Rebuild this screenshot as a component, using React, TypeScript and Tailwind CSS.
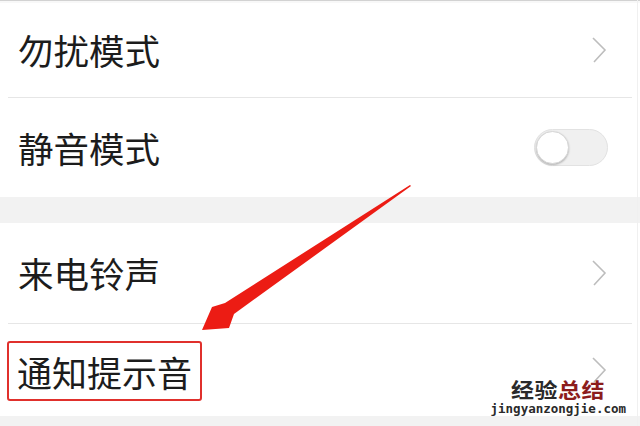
import { ReactNode } from 'react';

const font = { fontFamily: '"Noto Sans CJK SC", "Noto Sans", sans-serif' };

function Chevron() {
  return (
    <svg width="16" height="28" viewBox="0 0 16 28" className="shrink-0">
      <polyline points="2,2 14,14 3,26" fill="none" stroke="#bdbdbd" strokeWidth="1.6" />
    </svg>
  );
}

function Toggle() {
  return (
    <div className="relative w-[74px] h-[37px] rounded-full bg-[#f0f0f0] border border-[#e2e2e2] shrink-0">
      <div className="absolute left-[1px] top-[1px] w-[33px] h-[33px] rounded-full bg-white border border-[#d6d6d6] shadow-[0_1px_2px_rgba(0,0,0,0.25)]" />
    </div>
  );
}

function Row({ label, right, h, boxed }: { label: string; right: ReactNode; h: string; boxed?: boolean }) {
  return (
    <div className={`flex items-center justify-between pl-[18px] pr-[33px] ${h}`}>
      {boxed ? (
        <span className="ml-[-11px] mt-[2px] px-[8px] h-[60px] flex items-center border-2 border-[#e0302c] rounded-[3px] text-[35px] text-[#1c1c1c] leading-none">
          {label}
        </span>
      ) : (
        <span className="text-[35.5px] text-[#1c1c1c] leading-none">{label}</span>
      )}
      {right}
    </div>
  );
}

export default function App() {
  return (
    <div className="relative w-[640px] h-[426px] overflow-hidden bg-white" style={font}>
      <div className="h-[3px] border-t border-[#d2d2d2] bg-[#f8f8f8]" />
      <Row label="勿扰模式" right={<Chevron />} h="h-[94px]" />
      <div className="mx-2 h-px bg-[#e6e6e6]" />
      <Row label="静音模式" right={<div className="mr-[-1px]"><Toggle /></div>} h="h-[99px]" />
      <div className="h-[26px] bg-[#f2f2f2]" />
      <Row label="来电铃声" right={<Chevron />} h="h-[100px]" />
      <div className="mx-2 h-px bg-[#e6e6e6]" />
      <Row label="通知提示音" right={<Chevron />} h="h-[92px]" boxed />
      <div className="h-[10px] bg-[#f2f2f2]" />

      {/* right edge line */}
      <div className="absolute right-[2px] top-0 bottom-0 w-px bg-[#f0f0f0]" />

      {/* red arrow */}
      <svg className="absolute inset-0" width="640" height="426" viewBox="0 0 640 426">
        <path
          d="M410,185 L411,186 L234,314 L229,328 L202,330 L212,307 L225,303 Z"
          fill="#ec1c14"
        />
      </svg>

      {/* watermark */}
      <div className="absolute right-[14px] bottom-[11px] flex flex-col items-end gap-[4px]">
        <div className="mr-[21px] flex text-[23px] font-bold leading-[20px] tracking-[0.5px] whitespace-nowrap scale-y-90">
          <span className="text-[#2a2a2a]">经验</span>
          <span className="text-[#8c1c1c]">总结</span>
        </div>
        <div
          className="text-[12.5px] leading-none text-[#2a2a2a] font-bold whitespace-nowrap"
          style={{ fontFamily: '"DejaVu Sans Mono", monospace' }}
        >
          jingyanzongjie.com
        </div>
      </div>
    </div>
  );
}
